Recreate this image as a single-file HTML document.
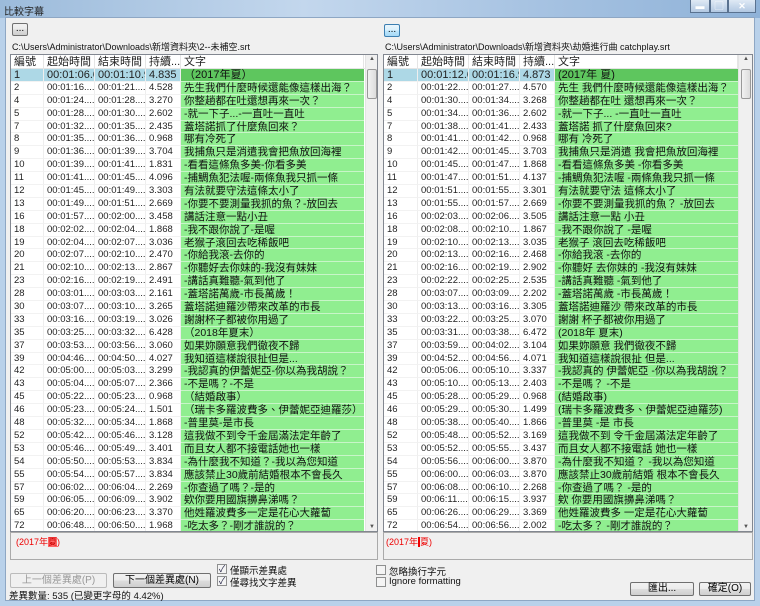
<!DOCTYPE html>
<html><head><meta charset="utf-8"><style>
*{margin:0;padding:0;box-sizing:border-box}
body{width:760px;height:606px;overflow:hidden;background:#b9d1ea;font-family:"Liberation Sans","Noto Sans CJK TC",sans-serif;position:relative}
.tb{position:absolute;left:0;top:0;width:760px;height:18px;background:linear-gradient(90deg,#9cbbdb,#c3d7ed 40%,#a7c3e2 70%,#8fb2d8);}
.tt{position:absolute;left:4px;top:3px;font-size:10px;color:#222}
.wc{position:absolute;top:0;height:13px;border:1px solid #5a7290;border-top:none;background:linear-gradient(#dfe9f5,#b2c8e2);font-size:9px;text-align:center;color:#fff;line-height:12px}
.client{position:absolute;left:5px;top:17px;width:750px;height:584px;background:#f0f0f0;border:1px solid #8ea7c4}
.btn{position:absolute;border:1px solid #707070;border-radius:2px;background:linear-gradient(#f2f2f2,#ebebeb 50%,#dddddd 51%,#cfcfcf);font-size:10px;text-align:center;color:#000}
.path{position:absolute;font-size:9px;color:#111;white-space:nowrap}
.lst{position:absolute;background:#fff;border:1px solid #828790;overflow:hidden}
.hd{height:14px;display:flex;border-bottom:1px solid #e5e5e5;font-size:11px;color:#222}
.hd span{padding-left:3px;border-right:1px solid #e5e5e5;line-height:14px;white-space:nowrap;overflow:hidden}
.r{height:12.9px;display:flex;font-size:9.5px;color:#222;line-height:12px}
.r span{padding-left:3px;white-space:nowrap;overflow:hidden;border-right:1px solid #eee;border-bottom:1px solid #f2f2f2}
.r span.t{background:#90ee90;border-bottom:1px solid #c8f5c8;border-right:none;font-size:10.5px;color:#111;line-height:12.5px}
.s span{background:#add8e6;font-size:11px}
.s span.t{background:#5ec65e;font-size:11px}
.a{width:33px}.b{width:51px}.c{width:51px}.d{width:35px}.t{width:183px}
.sb{position:absolute;top:0;width:12px;bottom:0;background:#f0f0f0;border-left:1px solid #e4e4e4}
.th{position:absolute;left:1px;top:14px;width:10px;height:30px;border:1px solid #999;border-radius:2px;background:linear-gradient(90deg,#f2f2f2,#dcdcdc)}
.ar{position:absolute;left:3px;font-size:6px;color:#555}
.tx{position:absolute;background:#f0f0f0;border:1px solid #aaa;font-size:9px;color:#e00;padding:2px 5px}
.cb{position:absolute;width:10px;height:10px;border:1px solid #8e8f8f;background:#f4f4f4;font-size:9px;line-height:8px;text-align:center;color:#224}
.lb{position:absolute;font-size:9.5px;color:#111;white-space:nowrap}
</style></head><body>
<div class="tb"><div class="tt">比較字幕</div>
<div class="wc" style="left:690px;width:20px">▬</div>
<div class="wc" style="left:710px;width:18px">▢</div>
<div class="wc" style="left:728px;width:28px;font-weight:bold">✕</div></div>
<div class="client"></div>

<div class="btn" style="left:12px;top:23px;width:16px;height:13px;line-height:10px">...</div>
<div class="path" style="left:12px;top:40px">C:\Users\Administrator\Downloads\新增資料夾\2--未補空.srt</div>
<div class="btn" style="left:384px;top:24px;width:16px;height:13px;line-height:10px;border-color:#3c7fb1;background:linear-gradient(#eaf6fd,#d9f0fc 50%,#bee6fd 51%,#a7d9f5)">...</div>
<div class="path" style="left:385px;top:40px">C:\Users\Administrator\Downloads\新增資料夾\劫婚進行曲 catchplay.srt</div>

<div class="lst" style="left:10px;top:54px;width:368px;height:478px">
<div class="hd"><span class="a">編號</span><span class="b">起始時間</span><span class="c">結束時間</span><span class="d">持續...</span><span class="t" style="background:#fff">文字</span></div>
<div class="r s"><span class="a">1</span><span class="b">00:01:06.09</span><span class="c">00:01:10.93</span><span class="d">4.835</span><span class="t">（2017年夏）</span></div>
<div class="r"><span class="a">2</span><span class="b">00:01:16....</span><span class="c">00:01:21....</span><span class="d">4.528</span><span class="t">先生我們什麼時候還能像這樣出海？</span></div>
<div class="r"><span class="a">4</span><span class="b">00:01:24....</span><span class="c">00:01:28....</span><span class="d">3.270</span><span class="t">你整趟都在吐還想再來一次？</span></div>
<div class="r"><span class="a">5</span><span class="b">00:01:28....</span><span class="c">00:01:30....</span><span class="d">2.602</span><span class="t">-就一下子...-一直吐一直吐</span></div>
<div class="r"><span class="a">7</span><span class="b">00:01:32....</span><span class="c">00:01:35....</span><span class="d">2.435</span><span class="t">蓋塔諾抓了什麼魚回來？</span></div>
<div class="r"><span class="a">8</span><span class="b">00:01:35....</span><span class="c">00:01:36....</span><span class="d">0.968</span><span class="t">哪有冷死了</span></div>
<div class="r"><span class="a">9</span><span class="b">00:01:36....</span><span class="c">00:01:39....</span><span class="d">3.704</span><span class="t">我捕魚只是消遣我會把魚放回海裡</span></div>
<div class="r"><span class="a">10</span><span class="b">00:01:39....</span><span class="c">00:01:41....</span><span class="d">1.831</span><span class="t">-看看這條魚多美-你看多美</span></div>
<div class="r"><span class="a">11</span><span class="b">00:01:41....</span><span class="c">00:01:45....</span><span class="d">4.096</span><span class="t">-捕鯛魚犯法喔-兩條魚我只抓一條</span></div>
<div class="r"><span class="a">12</span><span class="b">00:01:45....</span><span class="c">00:01:49....</span><span class="d">3.303</span><span class="t">有法就要守法這條太小了</span></div>
<div class="r"><span class="a">13</span><span class="b">00:01:49....</span><span class="c">00:01:51....</span><span class="d">2.669</span><span class="t">-你要不要測量我抓的魚？-放回去</span></div>
<div class="r"><span class="a">16</span><span class="b">00:01:57....</span><span class="c">00:02:00....</span><span class="d">3.458</span><span class="t">講話注意一點小丑</span></div>
<div class="r"><span class="a">18</span><span class="b">00:02:02....</span><span class="c">00:02:04....</span><span class="d">1.868</span><span class="t">-我不跟你說了-是喔</span></div>
<div class="r"><span class="a">19</span><span class="b">00:02:04....</span><span class="c">00:02:07....</span><span class="d">3.036</span><span class="t">老猴子滾回去吃稀飯吧</span></div>
<div class="r"><span class="a">20</span><span class="b">00:02:07....</span><span class="c">00:02:10....</span><span class="d">2.470</span><span class="t">-你給我滾-去你的</span></div>
<div class="r"><span class="a">21</span><span class="b">00:02:10....</span><span class="c">00:02:13....</span><span class="d">2.867</span><span class="t">-你聽好去你妹的-我沒有妹妹</span></div>
<div class="r"><span class="a">23</span><span class="b">00:02:16....</span><span class="c">00:02:19....</span><span class="d">2.491</span><span class="t">-講話真難聽-氣到他了</span></div>
<div class="r"><span class="a">28</span><span class="b">00:03:01....</span><span class="c">00:03:03....</span><span class="d">2.161</span><span class="t">-蓋塔諾萬歲-市長萬歲！</span></div>
<div class="r"><span class="a">30</span><span class="b">00:03:07....</span><span class="c">00:03:10....</span><span class="d">3.265</span><span class="t">蓋塔諾迪羅沙帶來改革的市長</span></div>
<div class="r"><span class="a">33</span><span class="b">00:03:16....</span><span class="c">00:03:19....</span><span class="d">3.026</span><span class="t">謝謝杯子都被你用過了</span></div>
<div class="r"><span class="a">35</span><span class="b">00:03:25....</span><span class="c">00:03:32....</span><span class="d">6.428</span><span class="t">（2018年夏末）</span></div>
<div class="r"><span class="a">37</span><span class="b">00:03:53....</span><span class="c">00:03:56....</span><span class="d">3.060</span><span class="t">如果妳願意我們徹夜不歸</span></div>
<div class="r"><span class="a">39</span><span class="b">00:04:46....</span><span class="c">00:04:50....</span><span class="d">4.027</span><span class="t">我知道這樣說很扯但是...</span></div>
<div class="r"><span class="a">42</span><span class="b">00:05:00....</span><span class="c">00:05:03....</span><span class="d">3.299</span><span class="t">-我認真的伊蕾妮亞-你以為我胡說？</span></div>
<div class="r"><span class="a">43</span><span class="b">00:05:04....</span><span class="c">00:05:07....</span><span class="d">2.366</span><span class="t">-不是嗎？-不是</span></div>
<div class="r"><span class="a">45</span><span class="b">00:05:22....</span><span class="c">00:05:23....</span><span class="d">0.968</span><span class="t">（結婚啟事）</span></div>
<div class="r"><span class="a">46</span><span class="b">00:05:23....</span><span class="c">00:05:24....</span><span class="d">1.501</span><span class="t">（瑞卡多羅波費多、伊蕾妮亞迪羅莎）</span></div>
<div class="r"><span class="a">48</span><span class="b">00:05:32....</span><span class="c">00:05:34....</span><span class="d">1.868</span><span class="t">-普里莫-是市長</span></div>
<div class="r"><span class="a">52</span><span class="b">00:05:42....</span><span class="c">00:05:46....</span><span class="d">3.128</span><span class="t">這我做不到令千金屆滿法定年齡了</span></div>
<div class="r"><span class="a">53</span><span class="b">00:05:46....</span><span class="c">00:05:49....</span><span class="d">3.401</span><span class="t">而且女人都不接電話她也一樣</span></div>
<div class="r"><span class="a">54</span><span class="b">00:05:50....</span><span class="c">00:05:53....</span><span class="d">3.834</span><span class="t">-為什麼我不知道？-我以為您知道</span></div>
<div class="r"><span class="a">55</span><span class="b">00:05:54....</span><span class="c">00:05:57....</span><span class="d">3.834</span><span class="t">應該禁止30歲前結婚根本不會長久</span></div>
<div class="r"><span class="a">57</span><span class="b">00:06:02....</span><span class="c">00:06:04....</span><span class="d">2.269</span><span class="t">-你查過了嗎？-是的</span></div>
<div class="r"><span class="a">59</span><span class="b">00:06:05....</span><span class="c">00:06:09....</span><span class="d">3.902</span><span class="t">欸你要用國旗擤鼻涕嗎？</span></div>
<div class="r"><span class="a">65</span><span class="b">00:06:20....</span><span class="c">00:06:23....</span><span class="d">3.370</span><span class="t">他姓羅波費多一定是花心大蘿蔔</span></div>
<div class="r"><span class="a">72</span><span class="b">00:06:48....</span><span class="c">00:06:50....</span><span class="d">1.968</span><span class="t">-吃太多？-剛才誰說的？</span></div>
<div class="r"><span class="a"></span><span class="b"></span><span class="c"></span><span class="d"></span><span class="t"></span></div>
<div class="sb" style="right:0"><div class="ar" style="top:1px">▲</div><div class="th"></div><div class="ar" style="bottom:1px">▼</div></div>
</div>

<div class="lst" style="left:383px;top:54px;width:370px;height:478px">
<div class="hd"><span class="a" style="width:34px">編號</span><span class="b">起始時間</span><span class="c">結束時間</span><span class="d">持續...</span><span class="t" style="background:#fff">文字</span></div>
<div class="r s"><span class="a" style="width:34px">1</span><span class="b">00:01:12.09</span><span class="c">00:01:16.97</span><span class="d">4.873</span><span class="t">(2017年 夏)</span></div>
<div class="r"><span class="a" style="width:34px">2</span><span class="b">00:01:22....</span><span class="c">00:01:27....</span><span class="d">4.570</span><span class="t">先生 我們什麼時候還能像這樣出海？</span></div>
<div class="r"><span class="a" style="width:34px">4</span><span class="b">00:01:30....</span><span class="c">00:01:34....</span><span class="d">3.268</span><span class="t">你整趟都在吐 還想再來一次？</span></div>
<div class="r"><span class="a" style="width:34px">5</span><span class="b">00:01:34....</span><span class="c">00:01:36....</span><span class="d">2.602</span><span class="t">-就一下子... -一直吐一直吐</span></div>
<div class="r"><span class="a" style="width:34px">7</span><span class="b">00:01:38....</span><span class="c">00:01:41....</span><span class="d">2.433</span><span class="t">蓋塔諾 抓了什麼魚回來?</span></div>
<div class="r"><span class="a" style="width:34px">8</span><span class="b">00:01:41....</span><span class="c">00:01:42....</span><span class="d">0.968</span><span class="t">哪有 冷死了</span></div>
<div class="r"><span class="a" style="width:34px">9</span><span class="b">00:01:42....</span><span class="c">00:01:45....</span><span class="d">3.703</span><span class="t">我捕魚只是消遣 我會把魚放回海裡</span></div>
<div class="r"><span class="a" style="width:34px">10</span><span class="b">00:01:45....</span><span class="c">00:01:47....</span><span class="d">1.868</span><span class="t">-看看這條魚多美 -你看多美</span></div>
<div class="r"><span class="a" style="width:34px">11</span><span class="b">00:01:47....</span><span class="c">00:01:51....</span><span class="d">4.137</span><span class="t">-捕鯛魚犯法喔 -兩條魚我只抓一條</span></div>
<div class="r"><span class="a" style="width:34px">12</span><span class="b">00:01:51....</span><span class="c">00:01:55....</span><span class="d">3.301</span><span class="t">有法就要守法 這條太小了</span></div>
<div class="r"><span class="a" style="width:34px">13</span><span class="b">00:01:55....</span><span class="c">00:01:57....</span><span class="d">2.669</span><span class="t">-你要不要測量我抓的魚？ -放回去</span></div>
<div class="r"><span class="a" style="width:34px">16</span><span class="b">00:02:03....</span><span class="c">00:02:06....</span><span class="d">3.505</span><span class="t">講話注意一點 小丑</span></div>
<div class="r"><span class="a" style="width:34px">18</span><span class="b">00:02:08....</span><span class="c">00:02:10....</span><span class="d">1.867</span><span class="t">-我不跟你說了 -是喔</span></div>
<div class="r"><span class="a" style="width:34px">19</span><span class="b">00:02:10....</span><span class="c">00:02:13....</span><span class="d">3.035</span><span class="t">老猴子 滾回去吃稀飯吧</span></div>
<div class="r"><span class="a" style="width:34px">20</span><span class="b">00:02:13....</span><span class="c">00:02:16....</span><span class="d">2.468</span><span class="t">-你給我滾 -去你的</span></div>
<div class="r"><span class="a" style="width:34px">21</span><span class="b">00:02:16....</span><span class="c">00:02:19....</span><span class="d">2.902</span><span class="t">-你聽好 去你妹的 -我沒有妹妹</span></div>
<div class="r"><span class="a" style="width:34px">23</span><span class="b">00:02:22....</span><span class="c">00:02:25....</span><span class="d">2.535</span><span class="t">-講話真難聽 -氣到他了</span></div>
<div class="r"><span class="a" style="width:34px">28</span><span class="b">00:03:07....</span><span class="c">00:03:09....</span><span class="d">2.202</span><span class="t">-蓋塔諾萬歲 -市長萬歲！</span></div>
<div class="r"><span class="a" style="width:34px">30</span><span class="b">00:03:13....</span><span class="c">00:03:16....</span><span class="d">3.305</span><span class="t">蓋塔諾迪羅沙 帶來改革的市長</span></div>
<div class="r"><span class="a" style="width:34px">33</span><span class="b">00:03:22....</span><span class="c">00:03:25....</span><span class="d">3.070</span><span class="t">謝謝 杯子都被你用過了</span></div>
<div class="r"><span class="a" style="width:34px">35</span><span class="b">00:03:31....</span><span class="c">00:03:38....</span><span class="d">6.472</span><span class="t">(2018年 夏末)</span></div>
<div class="r"><span class="a" style="width:34px">37</span><span class="b">00:03:59....</span><span class="c">00:04:02....</span><span class="d">3.104</span><span class="t">如果妳願意 我們徹夜不歸</span></div>
<div class="r"><span class="a" style="width:34px">39</span><span class="b">00:04:52....</span><span class="c">00:04:56....</span><span class="d">4.071</span><span class="t">我知道這樣說很扯 但是...</span></div>
<div class="r"><span class="a" style="width:34px">42</span><span class="b">00:05:06....</span><span class="c">00:05:10....</span><span class="d">3.337</span><span class="t">-我認真的 伊蕾妮亞 -你以為我胡說？</span></div>
<div class="r"><span class="a" style="width:34px">43</span><span class="b">00:05:10....</span><span class="c">00:05:13....</span><span class="d">2.403</span><span class="t">-不是嗎？ -不是</span></div>
<div class="r"><span class="a" style="width:34px">45</span><span class="b">00:05:28....</span><span class="c">00:05:29....</span><span class="d">0.968</span><span class="t">(結婚啟事)</span></div>
<div class="r"><span class="a" style="width:34px">46</span><span class="b">00:05:29....</span><span class="c">00:05:30....</span><span class="d">1.499</span><span class="t">(瑞卡多羅波費多、伊蕾妮亞迪羅莎)</span></div>
<div class="r"><span class="a" style="width:34px">48</span><span class="b">00:05:38....</span><span class="c">00:05:40....</span><span class="d">1.866</span><span class="t">-普里莫 -是 市長</span></div>
<div class="r"><span class="a" style="width:34px">52</span><span class="b">00:05:48....</span><span class="c">00:05:52....</span><span class="d">3.169</span><span class="t">這我做不到 令千金屆滿法定年齡了</span></div>
<div class="r"><span class="a" style="width:34px">53</span><span class="b">00:05:52....</span><span class="c">00:05:55....</span><span class="d">3.437</span><span class="t">而且女人都不接電話 她也一樣</span></div>
<div class="r"><span class="a" style="width:34px">54</span><span class="b">00:05:56....</span><span class="c">00:06:00....</span><span class="d">3.870</span><span class="t">-為什麼我不知道？ -我以為您知道</span></div>
<div class="r"><span class="a" style="width:34px">55</span><span class="b">00:06:00....</span><span class="c">00:06:03....</span><span class="d">3.870</span><span class="t">應該禁止30歲前結婚 根本不會長久</span></div>
<div class="r"><span class="a" style="width:34px">57</span><span class="b">00:06:08....</span><span class="c">00:06:10....</span><span class="d">2.268</span><span class="t">-你查過了嗎？ -是的</span></div>
<div class="r"><span class="a" style="width:34px">59</span><span class="b">00:06:11....</span><span class="c">00:06:15....</span><span class="d">3.937</span><span class="t">欸 你要用國旗擤鼻涕嗎？</span></div>
<div class="r"><span class="a" style="width:34px">65</span><span class="b">00:06:26....</span><span class="c">00:06:29....</span><span class="d">3.369</span><span class="t">他姓羅波費多 一定是花心大蘿蔔</span></div>
<div class="r"><span class="a" style="width:34px">72</span><span class="b">00:06:54....</span><span class="c">00:06:56....</span><span class="d">2.002</span><span class="t">-吃太多？ -剛才誰說的？</span></div>
<div class="r"><span class="a" style="width:34px"></span><span class="b"></span><span class="c"></span><span class="d"></span><span class="t"></span></div>
<div class="sb" style="right:0;width:14px"><div class="ar" style="top:1px;left:4px">▲</div><div class="th" style="left:2px"></div><div class="ar" style="bottom:1px;left:4px">▼</div></div>
</div>

<div class="tx" style="left:10px;top:532px;width:368px;height:28px">(2017年<span style="background:#f66;color:#c00">夏</span>)</div>
<div class="tx" style="left:383px;top:532px;width:370px;height:28px;padding-left:2px">(2017年<span style="border-left:2px solid #e00">夏</span>)</div>

<div class="btn" style="left:10px;top:573px;width:97px;height:15px;line-height:13px;color:#999;border-color:#bbb;background:#f0f0f0">上一個差異處(P)</div>
<div class="btn" style="left:113px;top:573px;width:98px;height:15px;line-height:13px">下一個差異處(N)</div>
<div class="cb" style="left:217px;top:564px">✓</div><div class="lb" style="left:230px;top:563px">僅顯示差異處</div>
<div class="cb" style="left:217px;top:576px">✓</div><div class="lb" style="left:230px;top:575px">僅尋找文字差異</div>
<div class="cb" style="left:376px;top:565px"></div><div class="lb" style="left:389px;top:564px">忽略換行字元</div>
<div class="cb" style="left:376px;top:577px"></div><div class="lb" style="left:389px;top:576px">Ignore formatting</div>
<div class="lb" style="left:9px;top:588px">差異數量: 535 (已變更字母的 4.42%)</div>
<div class="btn" style="left:630px;top:582px;width:64px;height:14px;line-height:12px">匯出...</div>
<div class="btn" style="left:699px;top:582px;width:52px;height:14px;line-height:12px">確定(O)</div>
</body></html>
